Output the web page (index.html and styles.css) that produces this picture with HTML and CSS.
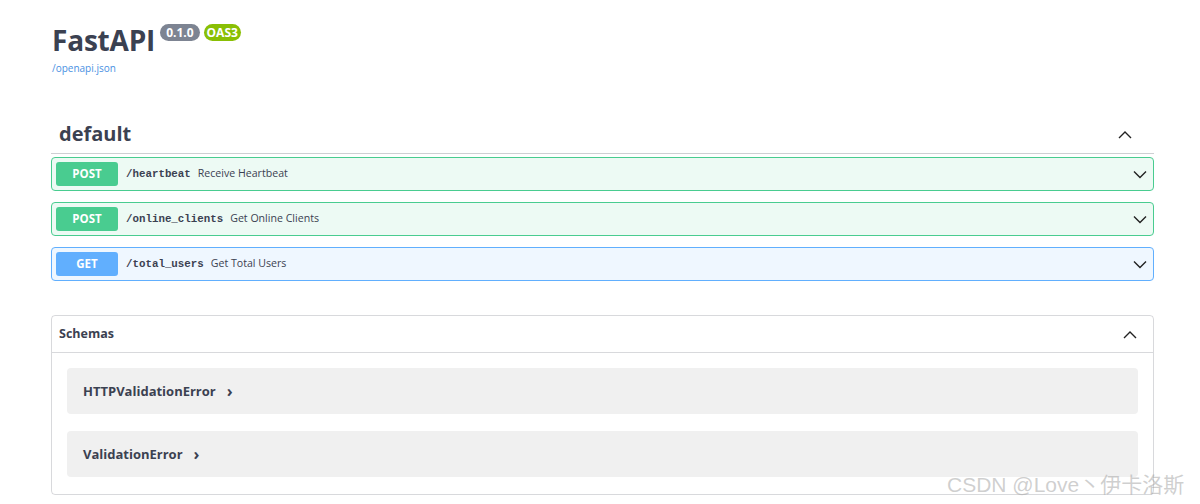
FILE: index.html
```html
<!DOCTYPE html>
<html lang="en">
<head>
<meta charset="utf-8">
<title>FastAPI - Swagger UI</title>
<link rel="stylesheet" href="styles.css">
</head>
<body>
<div class="wrapper">
  <div class="info">
    <h1 class="title"><span class="title-text">FastAPI</span><span class="badges"><span class="badge version">0.1.0</span><span class="badge oas">OAS3</span></span></h1>
    <a class="link" href="#">/openapi.json</a>
  </div>

  <div class="tag-section">
    <div class="tag-head">
      <h3 class="tag-name">default</h3>
      <svg class="chev" width="14" height="9" viewBox="0 0 14 9"><path d="M1 8 L7 2 L13 8" fill="none" stroke="#222" stroke-width="1.4"/></svg>
    </div>
    <div class="opblock post">
      <span class="method">POST</span>
      <span class="path">/heartbeat</span>
      <span class="summary">Receive Heartbeat</span>
      <svg class="chev-down" width="14" height="9" viewBox="0 0 14 9"><path d="M1 1.5 L7 7.5 L13 1.5" fill="none" stroke="#222" stroke-width="1.4"/></svg>
    </div>
    <div class="opblock post">
      <span class="method">POST</span>
      <span class="path">/online_clients</span>
      <span class="summary">Get Online Clients</span>
      <svg class="chev-down" width="14" height="9" viewBox="0 0 14 9"><path d="M1 1.5 L7 7.5 L13 1.5" fill="none" stroke="#222" stroke-width="1.4"/></svg>
    </div>
    <div class="opblock get">
      <span class="method">GET</span>
      <span class="path">/total_users</span>
      <span class="summary">Get Total Users</span>
      <svg class="chev-down" width="14" height="9" viewBox="0 0 14 9"><path d="M1 1.5 L7 7.5 L13 1.5" fill="none" stroke="#222" stroke-width="1.4"/></svg>
    </div>
  </div>

  <div class="schemas">
    <div class="schemas-head">
      <span class="schemas-title">Schemas</span>
      <svg class="chev" width="14" height="9" viewBox="0 0 14 9"><path d="M1 8 L7 2 L13 8" fill="none" stroke="#222" stroke-width="1.4"/></svg>
    </div>
    <div class="schemas-body">
      <div class="model"><span class="model-name">HTTPValidationError</span><span class="arrow">›</span></div>
      <div class="model"><span class="model-name">ValidationError</span><span class="arrow">›</span></div>
    </div>
  </div>
</div>
<div class="watermark">CSDN @Love丶伊卡洛斯</div>
</body>
</html>
```

FILE: styles.css
```css
html, body {
  margin: 0;
  padding: 0;
  background: #fff;
}
body {
  font-family: "Open Sans", "Noto Sans", "Noto Sans CJK SC", sans-serif;
  color: #3b4151;
  height: 504px;
  overflow: hidden;
  position: relative;
}
.wrapper {
  margin-left: 51px;
  width: 1103px;
}
.info {
  padding-top: 20px;
  padding-left: 1px;
}
.title {
  margin: 0;
  font-size: 28px;
  font-weight: 700;
  line-height: 40px;
  height: 40px;
  color: #3b4151;
  display: flex;
  align-items: flex-start;
}
.title-text {
  letter-spacing: -0.2px;
}
.badges {
  display: inline-flex;
  gap: 4px;
  margin-left: 5px;
  margin-top: 4px;
}
.badge {
  display: inline-block;
  height: 17px;
  line-height: 17px;
  padding: 0 6px;
  border-radius: 9px;
  color: #fff;
  font-size: 12px;
  font-weight: 700;
}
.version { background: #7d8492; }
.oas { background: #89bf04; padding: 0 3px; }
.link {
  display: block;
  margin-top: 1px;
  font-size: 10px;
  color: #4990e2;
  text-decoration: none;
  line-height: 14px;
}
.tag-section {
  margin-top: 41px;
}
.tag-head {
  display: flex;
  align-items: center;
  justify-content: space-between;
  height: 37px;
  border-bottom: 1px solid rgba(59, 65, 81, 0.25);
  padding: 0 22px 0 8px;
  margin-bottom: 3px;
}
.tag-name {
  margin: 0;
  font-size: 20px;
  font-weight: 700;
  color: #3b4151;
  position: relative;
  top: -1px;
}
.opblock {
  display: flex;
  align-items: center;
  height: 34px;
  box-sizing: border-box;
  border: 1px solid;
  border-radius: 4px;
  padding: 0 6px 0 4px;
  margin-bottom: 11px;
}
.opblock.post {
  border-color: #49cc90;
  background: #edfaf4;
}
.opblock.get {
  border-color: #61affe;
  background: #eff7ff;
}
.method {
  width: 62px;
  height: 24px;
  line-height: 24px;
  text-align: center;
  border-radius: 3px;
  color: #fff;
  font-size: 11.5px;
  font-weight: 700;
}
.post .method { background: #49cc90; }
.get .method { background: #61affe; }
.path {
  margin-left: 8px;
  font-family: "Liberation Mono", "DejaVu Sans Mono", monospace;
  font-size: 10.8px;
  font-weight: 700;
  color: #3b4151;
}
.summary {
  margin-left: 7px;
  font-size: 10.6px;
  color: #3b4151;
  flex: 1;
  position: relative;
  top: -1px;
}
.chev-down { flex: none; }
.schemas {
  margin-top: 34px;
  border: 1px solid rgba(59, 65, 81, 0.2);
  border-radius: 4px;
}
.schemas-head {
  display: flex;
  align-items: center;
  justify-content: space-between;
  height: 36px;
  padding: 0 16px 0 7px;
  border-bottom: 1px solid rgba(59, 65, 81, 0.2);
}
.schemas-title {
  font-size: 12.5px;
  font-weight: 700;
  position: relative;
  top: -1px;
}
.schemas-body {
  padding: 15px 15px 17px;
  display: flex;
  flex-direction: column;
  gap: 17px;
}
.model {
  height: 46px;
  background: #f0f0f0;
  border-radius: 4px;
  display: flex;
  align-items: center;
  padding-left: 16px;
}
.model-name {
  font-size: 13px;
  font-weight: 700;
  color: #3b4151;
}
.arrow {
  margin-left: 11px;
  font-size: 16px;
  font-weight: 700;
  line-height: 1;
  color: #3b4151;
}
.watermark {
  position: absolute;
  left: 947px;
  top: 471px;
  font-family: "Liberation Sans", "Noto Sans CJK SC", sans-serif;
  font-size: 21px;
  color: rgba(160, 160, 160, 0.5);
  white-space: nowrap;
  line-height: 28px;
}
```
